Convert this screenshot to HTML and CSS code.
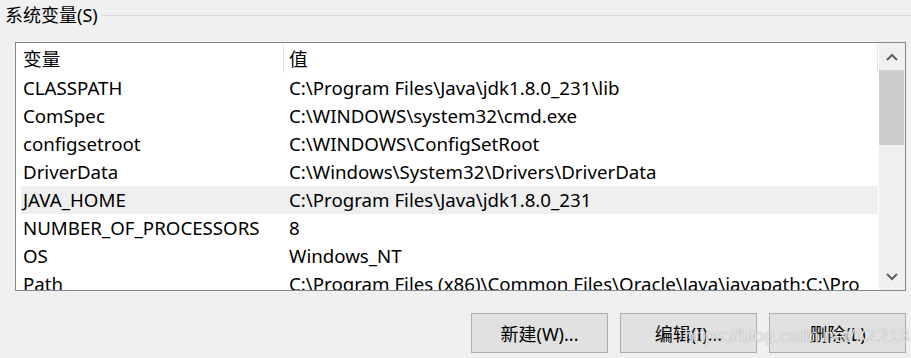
FILE: index.html
```html
<!DOCTYPE html>
<html lang="zh-CN">
<head>
    <meta charset="UTF-8">
    <title>系统变量</title>
    <link rel="stylesheet" href="styles.css">
</head>
<body>
    <div class="panel">
        <div class="group-title">
            <span>系统变量(S)</span>
            <div class="rule"></div>
        </div>

        <div class="listbox">
            <div class="list">
                <div class="row head">
                    <div class="cell name">变量</div>
                    <div class="cell value">值</div>
                </div>
                <div class="row"><div class="cell name">CLASSPATH</div><div class="cell value">C:\Program Files\Java\jdk1.8.0_231\lib</div></div>
                <div class="row"><div class="cell name">ComSpec</div><div class="cell value">C:\WINDOWS\system32\cmd.exe</div></div>
                <div class="row"><div class="cell name">configsetroot</div><div class="cell value">C:\WINDOWS\ConfigSetRoot</div></div>
                <div class="row"><div class="cell name">DriverData</div><div class="cell value">C:\Windows\System32\Drivers\DriverData</div></div>
                <div class="row selected"><div class="cell name">JAVA_HOME</div><div class="cell value">C:\Program Files\Java\jdk1.8.0_231</div></div>
                <div class="row"><div class="cell name">NUMBER_OF_PROCESSORS</div><div class="cell value">8</div></div>
                <div class="row"><div class="cell name">OS</div><div class="cell value">Windows_NT</div></div>
                <div class="row"><div class="cell name">Path</div><div class="cell value">C:\Program Files (x86)\Common Files\Oracle\Java\javapath;C:\Pro</div></div>
            </div>
            <div class="scrollbar">
                <div class="arrow">
                    <svg width="12" height="8" viewBox="0 0 12 8"><path d="M1 7 L6 2 L11 7" fill="none" stroke="#606060" stroke-width="2"/></svg>
                </div>
                <div class="track"><div class="thumb"></div></div>
                <div class="arrow">
                    <svg width="12" height="8" viewBox="0 0 12 8"><path d="M1 1 L6 6 L11 1" fill="none" stroke="#606060" stroke-width="2"/></svg>
                </div>
            </div>
        </div>

        <div class="buttons">
            <button class="btn">新建(W)...</button>
            <button class="btn">编辑(I)...</button>
            <button class="btn">删除(L)</button>
        </div>

        <div class="watermark">https://blog.csdn.net/XZ213</div>
    </div>
</body>
</html>
```

FILE: styles.css
```css
* {
    margin: 0;
    padding: 0;
    box-sizing: border-box;
}

body {
    background: #f0f0f0;
    font-family: "Noto Sans", "Noto Sans CJK SC", sans-serif;
    font-size: 18.7px;
    color: #000;
    width: 911px;
    height: 358px;
    overflow: hidden;
}

.panel {
    position: relative;
    height: 358px;
}

/* group box caption */
.group-title {
    display: flex;
    align-items: center;
    height: 30px;
    padding-left: 5px;
}

.group-title span {
    font-size: 18px;
    line-height: 30px;
    padding-right: 3px;
}

.rule {
    flex: 1;
    height: 1px;
    background: #dcdcdc;
}

/* list view */
.listbox {
    display: grid;
    grid-template-columns: 1fr 26px;
    margin: 12px 5px 0 15px;
    height: 249px;
    border: 1px solid #828790;
    background: #fff;
    overflow: hidden;
}

.list {
    padding: 0 1px 0 5px;
    overflow: hidden;
}

.row {
    display: grid;
    grid-template-columns: 262px 1fr;
    height: 28px;
    line-height: 28px;
    white-space: nowrap;
}

.row.head {
    height: 31px;
    line-height: 31px;
}

.row.head .value {
    position: relative;
}

.row.head .value::before,
.row.head .value::after {
    content: "";
    position: absolute;
    top: 1px;
    bottom: 1px;
    width: 1px;
    background: #e5e5e5;
}

.row.head .value::before {
    left: 0;
}

.row.head .value::after {
    right: 0;
}

.row.selected {
    background: #efefef;
}

.cell {
    overflow: hidden;
}

.cell.name {
    padding-left: 2px;
}

.cell.value {
    padding-left: 6px;
}

/* scrollbar */
.scrollbar {
    display: flex;
    flex-direction: column;
    background: #f0f0f0;
}

.arrow {
    height: 27px;
    display: flex;
    align-items: center;
    justify-content: center;
}

.track {
    flex: 1;
}

.thumb {
    height: 75px;
    margin-right: 1px;
    background: #cdcdcd;
}

/* buttons */
.buttons {
    display: flex;
    justify-content: flex-end;
    gap: 12px;
    margin-top: 22px;
    padding-right: 5px;
}

.btn {
    width: 137px;
    height: 40px;
    background: #e1e1e1;
    border: 1px solid #adadad;
    font-family: inherit;
    font-size: 18px;
    color: #000;
}

.watermark {
    position: absolute;
    left: 684px;
    top: 325px;
    font-family: "Liberation Sans", Arial, sans-serif;
    font-size: 18.5px;
    color: rgba(255, 255, 255, 0.8);
    text-shadow: 0 0 1px rgba(80, 80, 80, 0.65);
    white-space: nowrap;
    pointer-events: none;
}
```
